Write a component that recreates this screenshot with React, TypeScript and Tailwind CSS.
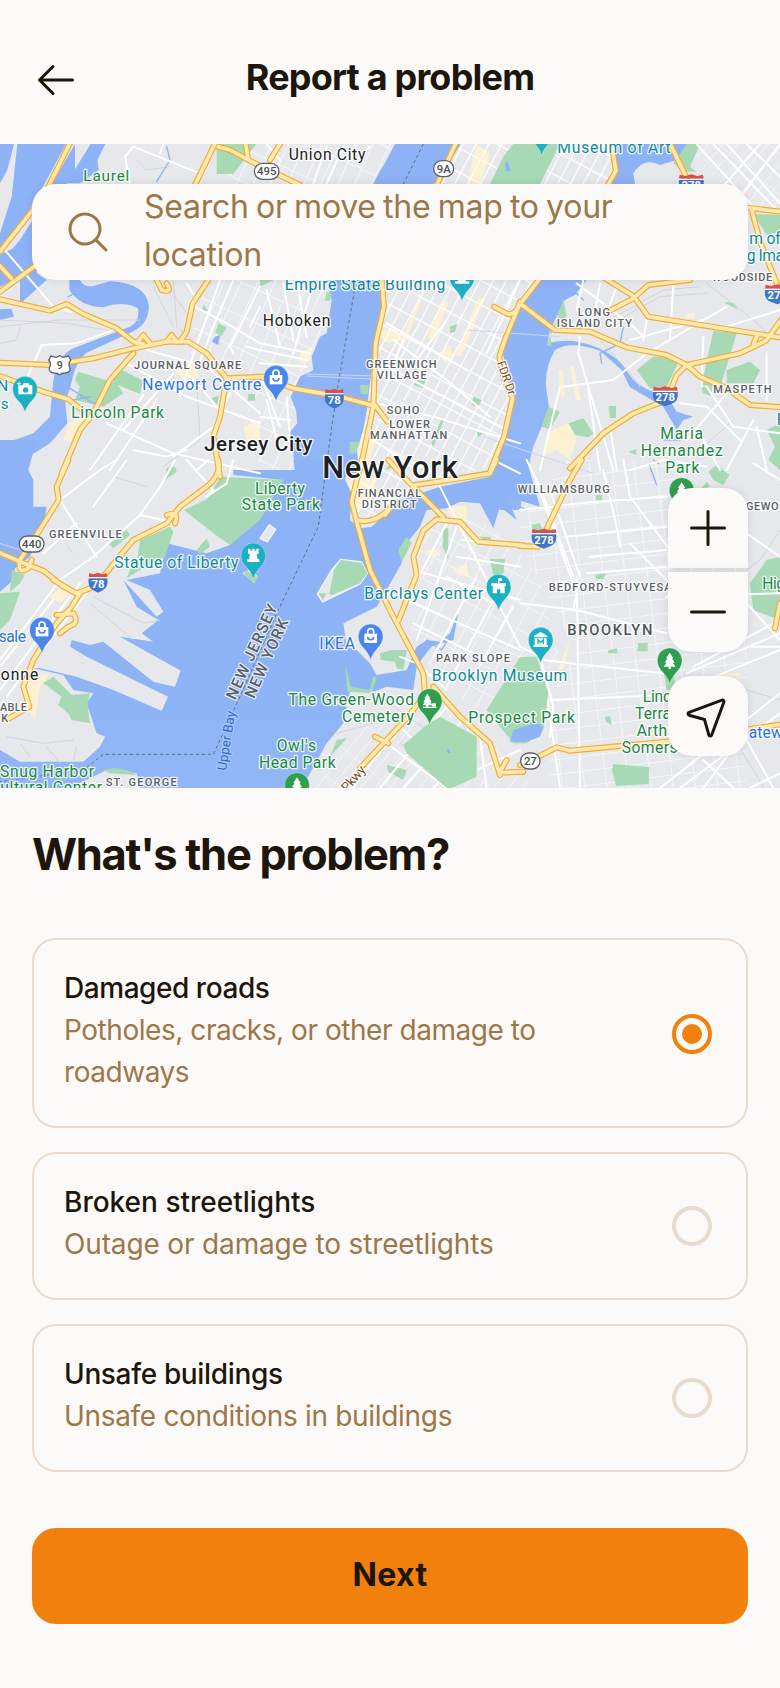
import type { ReactNode } from "react";
import { PiArrowLeft, PiMagnifyingGlass, PiMinus, PiNavigationArrow, PiPlus } from "react-icons/pi";

/* The map is drawn on a 3x canvas that is split into six tiles; each feature is given in its tile's coordinates. */
const ORIGINS = {
  A: [0, 420],
  B: [780, 420],
  C: [1560, 420],
  D: [0, 1380],
  E: [780, 1380],
  F: [1560, 1380],
} as const;
type Tile = keyof typeof ORIGINS;
type Shape = [Tile, string];

const WATER: Shape[] = [
  ["A", "M0 12H42L22 90L0 130Z"],
  ["A", "M52 12H198L140 120L70 240L18 310L0 330V280L35 170Z"],
  ["A", "M225 12L180 90L110 220L60 300L20 345L60 390L90 370L120 200L225 110Z"],
  ["A", "M272 12H316L292 60L296 90L240 130H200L236 70Z"],
  ["A", "M15 335L110 300V400L140 420L60 492L60 408L0 440V345Z"],
  ["A", "M0 508L34 506L42 530L0 540Z"],
  ["A", "M208 420H240Q250 440 272 440L330 424Q440 430 447 500Q444 552 400 574L260 638Q226 665 214 730L196 790L202 850L150 910L70 960L80 1000H0V915L100 880L150 830L160 720Q170 650 220 625L390 560Q420 545 414 505Q370 480 310 502Q240 500 208 450Z"],
  ["A", "M645 590L660 585L655 615L635 605Z"],
  ["D", "M0 -60H110L85 30L100 60V140H140L132 190L90 290L45 325L40 360L0 395Z"],
  ["B", "M405 12H602L555 90L520 132L360 420L368 500L350 600L328 740L322 800L310 870L290 930L300 1000H105L100 940L86 880L112 850L108 810L92 770L120 710L160 690L155 650L180 590L200 580L215 480L200 420L340 132L350 110L380 60Z"],
  ["C", "M275 12H530L470 60L420 75Q370 50 340 100L345 132L300 300L200 420L165 465L135 480L115 520L90 570L82 612Q140 590 220 618Q300 650 325 700Q350 740 400 755L440 765L470 815L520 830L490 840L470 870L430 800L330 742L305 690L240 632Q150 600 105 630Q75 680 78 740L87 800L65 860L40 920L20 1000L0 1110H-60L-95 990L-50 900L-20 800L-55 620L0 500L60 420L265 132L285 100Z"],
  ["D", "M700 30L885 30L880 0H1050L1035 60L1055 100L1050 180L1080 205L1115 200L1165 155L1200 120L1320 80L1470 50L1490 0H1580L1620 140L1520 110L1550 180L1500 140L1480 205L1440 130L1380 125L1340 145L1280 150L1260 200L1220 250L1205 310L1165 380L1130 440L1030 490L1040 560L1070 570L1110 610L1130 645L1220 630L1250 560L1280 540L1320 545L1350 520L1375 460L1360 540L1290 560L1250 620L1240 690L1160 680L1120 695H1050L1030 790L980 850L930 940L905 984H420L410 940L320 930L210 984H0V870L60 905H250L300 860L315 830L290 820L260 730L280 700L220 690L190 645L100 625L118 624L230 650L340 690L485 752L504 710L260 590L210 560L215 540L270 555L310 545L460 665L525 680L542 632L360 530L460 545L425 520L475 480L410 440L370 360L470 470L490 455L450 390L380 360L480 340L500 250L620 280L690 255L850 60L700 45Z"],
];

const ISLANDS: Shape[] = [
  ["E", "M172 402L215 330L242 298L305 306L322 340L300 372L188 426Z"],
  ["E", "M0 235L28 194L47 208L22 246Z"],
  ["D", "M730 340L750 330L772 350L762 366Z"],
];

const PARKS: Shape[] = [
  ["A", "M650 12H770L700 102H650Z"],
  ["A", "M235 695L350 730L370 760L310 800L225 780L240 740L225 720Z"],
  ["A", "M350 682L430 722L420 762L340 730Z"],
  ["A", "M655 550L680 562L665 588L646 578Z"],
  ["A", "M610 495L625 510L605 515Z"],
  ["A", "M745 762h20v20h-22z"],
  ["A", "M635 775l22 -8l-6 28z"],
  ["A", "M510 975L530 990H505Z"],
  ["B", "M760 12H900L840 132H690L730 50Z"],
  ["B", "M0 420H40L0 440Z"],
  ["B", "M200 455L215 460L210 482H195Z"],
  ["B", "M570 560L592 552L585 575L570 580Z"],
  ["B", "M465 720L496 722L490 745L462 735Z"],
  ["B", "M640 770L665 780L655 800L634 796Z"],
  ["B", "M650 875L668 880L655 892Z"],
  ["B", "M545 835L553 840L520 920L514 910Z"],
  ["B", "M270 905H300L285 940H268Z"],
  ["B", "M300 735H325V762H302Z"],
  ["C", "M460 70L500 12H540L510 80L530 95L490 95Z"],
  ["C", "M700 222L780 225V275L740 285Z"],
  ["C", "M130 475L110 540L80 615L95 620L90 570L140 530Z"],
  ["C", "M580 572L650 580L600 745L545 735Z"],
  ["C", "M350 690L400 650L480 655L440 742L390 745Z"],
  ["C", "M620 690L690 665L720 690L700 730L620 730Z"],
  ["C", "M545 740H575V768L548 760Z"],
  ["C", "M610 488Q650 480 652 510Q635 495 610 488Z"],
  ["C", "M85 800L120 815L90 868L65 860Z"],
  ["C", "M145 850L190 835L220 880L205 892L165 885Z"],
  ["C", "M266 798h22v36h-18z"],
  ["C", "M740 870L780 850V990L745 960L765 920Z"],
  ["C", "M325 935l24 -8v18z"],
  ["D", "M552 150L620 118L662 50L850 60L780 180L690 255L640 220Z"],
  ["D", "M420 240L510 200L520 215L495 290L420 330L380 355L390 330L412 300Z"],
  ["D", "M325 250L380 210L390 225L340 265Z"],
  ["D", "M590 270L620 235L630 260L600 282Z"],
  ["D", "M500 25L525 20L530 35L495 60Z"],
  ["D", "M195 245L222 285L210 270Z"],
  ["D", "M35 330L75 345L60 370L30 395Z"],
  ["D", "M0 400L60 395L30 480L0 510Z"],
  ["D", "M130 670L160 650L215 705L270 700L262 730L270 790L215 780L205 760L175 735L185 710Z"],
  ["D", "M310 930Q360 915 410 945L330 940Z"],
  ["D", "M735 330L775 350L765 370L732 345Z"],
  ["E", "M208 400L222 330L242 300L305 308L322 340L300 370L215 405L200 398L188 420L175 400Z"],
  ["E", "M360 580L395 570L440 570L430 630L410 625L405 605L362 600Z"],
  ["E", "M255 610L272 680L330 690L338 650L350 652L335 700L262 695Z"],
  ["E", "M380 915L440 930L430 960L385 935Z"],
  ["E", "M550 205H565V300L548 260Z"],
  ["E", "M690 298L735 296L730 340L700 345Z"],
  ["E", "M655 230L692 232V250Z"],
  ["E", "M375 30L395 5L402 22Z"],
  ["E", "M415 270L440 230L455 250L425 305Z"],
  ["E", "M230 840L260 835L210 890Z"],
  ["F", "M565 35L590 15L628 45L610 75L580 60Z"],
  ["F", "M690 370L740 300L780 290V480L700 450Z"],
  ["F", "M280 912L388 922L386 972L288 978L276 930Z"],
  ["F", "M355 550L383 548V574H352Z"],
  ["F", "M265 570L290 565L293 580H265Z"],
  ["F", "M225 345L258 340L250 358H228Z"],
  ["F", "M228 105H246V122H228Z"],
  ["F", "M255 770L270 768L275 795L258 785Z"],
  ["F", "M432 640H460L470 690H440Z"],
  ["F", "M35 195L60 190L70 215H40Z"],
  ["F", "M540 90L560 65L570 80Z"],
];

/* Large parks that interrupt the street grid. */
const GREAT_PARKS: Shape[] = [
  ["E", "M430 855L500 795L540 770L650 830V950L575 984H560L440 880Z"],
  ["E", "M680 750L780 590L830 590L865 700L850 810L800 850L760 850Z"],
];

const PONDS: Shape[] = [
  ["E", "M760 810L790 800L830 790L850 800L840 830L800 845H750Z"],
  ["E", "M560 870l6 -4l6 12l-8 2z"],
  ["B", "M735 70L742 62L752 92L738 96Z"],
];

const DISTRICTS: Shape[] = [
  ["A", "M205 850L270 820L235 905L190 900Z"],
  ["A", "M730 860L780 840V905L740 900Z"],
  ["A", "M520 690L570 670L600 710L560 730Z"],
  ["B", "M350 580L400 560L430 600L380 610Z"],
  ["B", "M540 640l30 -25l10 30l-25 25z"],
  ["B", "M470 490l22 -25l-60 150l-16 8z"],
  ["B", "M545 480l20 10l-45 110l-18 -5z"],
  ["B", "M655 470l18 10l-70 170l-16 -4z"],
  ["B", "M120 640L155 620L150 665L120 670Z"],
  ["B", "M310 860L350 900L320 990H285Z"],
  ["B", "M650 12L690 40L660 132H620Z"],
  ["C", "M80 880L160 840L170 900L150 960L110 930L70 950Z"],
  ["C", "M115 690h12l8 80h-12z"],
  ["C", "M150 680h12l20 100h-14z"],
  ["C", "M495 520h30v15h-30z"],
  ["D", "M80 650L150 640L120 680L105 780L75 740Z"],
  ["D", "M150 410L200 370L210 400L180 430Z"],
  ["E", "M265 60L300 20L350 60L330 130L290 150L270 110Z"],
  ["E", "M560 145L620 135L620 180L580 190Z"],
  ["E", "M500 270h40v18h-40z"],
  ["E", "M580 330L620 310L625 350L590 345Z"],
  ["F", "M600 640H660V650H600Z"],
  ["F", "M150 540L130 630L112 630Z"],
];

const STREETS: Shape[] = [
  ["A", "M10 325L160 500L215 515M400 20L600 100M400 20L375 50L390 130M480 40L490 12"],
  ["A", "M70 740L125 615L230 610L340 570M560 430L585 470L565 490L680 550L780 610M660 420L560 700L540 770M700 420L640 560L590 690M780 440L690 620L700 640"],
  ["A", "M440 630L620 680L780 820M380 670L560 770L780 850M320 850L520 940L780 1000M430 765L270 990M470 780L330 990M520 700L370 870M400 930L500 950L560 930M690 760L640 860L520 950"],
  ["A", "M740 620L780 630M750 560L780 500M560 700L600 740L650 800"],
  ["B", "M0 610L150 640M0 630L140 660M20 450L60 620M70 430L100 600M110 420L140 590M160 430L100 640M10 0L60 60M200 20L160 130M250 20L200 130M330 20L290 60M0 670L140 680M20 780L50 900M80 770L90 900M0 830L90 840M0 700L60 860"],
  ["B", "M380 550L620 690M400 600L560 720L690 830M400 690L740 870M350 790L520 830L780 910M340 900L470 990M380 720L430 600M470 660L560 540"],
  ["C", "M0 420L-100 640M170 430L340 560L370 590M190 420L170 510M240 430L220 540M290 440L260 520M380 540L370 600M460 430L450 600M180 590L175 640L205 740L280 990M550 590L545 740M130 740L280 720L380 640L620 500M330 600L550 540M780 510L620 560M120 740L60 990M205 750L240 990M270 860L290 990"],
  ["C", "M530 12L700 200M580 12L780 220M620 12L780 190M680 12L780 110M780 12L640 200M720 12L600 150M740 640L740 780M620 760L560 830L500 900M560 740L640 860L780 880M480 790L560 800L660 900M700 840L620 990M710 860L740 990M540 880L600 990M330 990L430 960L560 980"],
  ["D", "M180 120L230 200L290 290M180 120L300 30L350 0M380 0L280 140M525 0L480 80L420 165L510 185M420 165L280 290L180 360L0 600M230 190L130 280M160 420L0 620M240 370L0 690M270 385L20 710M560 0L640 90L620 110M590 30L625 0M700 0L680 70L620 110"],
  ["E", "M540 80L590 180L780 560M560 190L440 420L550 470M590 200L470 540M460 330L780 420M440 420L780 570M460 490L660 590M610 240L780 260M590 290L780 320M560 350L700 430M650 350L520 590M700 420L560 680M760 440L640 650M420 590L470 610L560 690"],
  ["E", "M510 700L340 900L280 984M560 740L360 984M600 790L430 984M480 740L620 860M420 800L560 940M380 850L560 984M620 880L520 984M660 830L680 984M780 870L560 970M700 0L780 40"],
  ["F", "M20 0L60 80L160 350M90 90L180 350M40 40L170 400L160 450M250 30L290 200L300 260M310 0L330 110L480 310M0 150L180 130L290 120L440 110M0 430L170 450L440 520M0 590L150 610L430 640M170 350L180 984M440 410L780 400M700 10L780 60M90 720L440 705M80 700L120 984M0 560L60 590L100 740L90 830"],
  ["F", "M680 220L780 290M680 430L780 540M500 640L780 520M520 620L780 480M680 560H780M460 700L780 570M420 984L780 700M480 984L780 760M550 900L640 984M680 840L760 984M330 250L480 400M210 290L440 270M200 340L440 320M140 230L440 200M620 890L550 984M690 984L780 940"],
];

const THIN: Shape[] = [
  ["A", "M0 540L200 550L380 580M0 560L180 540L420 540M460 440L520 560M500 430L560 520M410 60L440 90L510 80M0 610L50 600L60 560M520 420L530 560L580 600M490 980L600 900L590 720"],
  ["C", "M250 550L430 450L540 440M260 560L420 470L560 460M560 430L700 540L740 580M640 840L540 930M240 600L330 700L360 740"],
  ["D", "M280 410L430 490L480 480M270 430L400 540M0 250L60 270M20 830L130 850L220 840M60 850L90 890M140 860L180 910M230 860L220 900M340 50L440 80"],
  ["E", "M230 820L340 790M420 850L590 984M330 690L600 880"],
  ["F", "M780 210L720 300L680 330M680 690L780 720M560 700L730 980"],
];

const CREEKS: Shape[] = [
  ["A", "M330 440L400 480M500 20L510 60L470 125M205 470L260 440L290 445M210 745L280 790L300 780M220 780L270 770"],
  ["C", "M160 450L190 480M310 560L300 610L240 640L245 670M430 900L480 900"],
  ["E", "M590 460L575 520L545 570L500 540M480 600L520 550"],
  ["F", "M390 20L410 75M400 0L415 10M0 140L20 150"],
];

const HIGHWAYS: Shape[] = [
  ["A", "M215 0L130 170L0 335M0 455L105 378M0 378L34 415M0 478L150 512L200 492L250 522L350 565L400 605L430 612"],
  ["A", "M0 668L150 675L280 655L400 625L500 605H565L620 640L680 715L790 710"],
  ["A", "M0 708L60 730L130 755L205 778L240 805M400 640L330 720L280 820L240 870L185 1000"],
  ["A", "M625 420L578 490L560 575L540 605M650 0L580 145M655 20L690 30L780 78L900 135M735 0L745 60M470 420L485 450Q520 460 500 430"],
  ["A", "M680 715L660 830L640 890L660 1010M410 610L430 585L450 610M500 605L515 585L530 605"],
  ["B", "M0 710L100 745L240 770L345 798M60 12L30 60M592 0L528 140M365 415L372 500L347 610L340 800L300 990M345 795L382 845"],
  ["B", "M780 490L738 590L718 650L730 710L758 775L732 890L688 1000M780 485Q765 535 735 518L702 500"],
  ["C", "M272 0L288 92L258 145M445 0L515 145M60 415L0 492M0 490L105 570L210 575L320 622L440 645L500 675L540 710L620 745L690 795L790 802"],
  ["C", "M500 675L660 640L738 602L790 530M255 415L340 468L385 530L790 594M270 512L340 475L385 435L510 420M680 203L790 216M695 210L722 310L770 430M700 612L712 585"],
  ["C", "M500 675L470 705L440 780L340 820L250 880L150 985"],
  ["D", "M205 0L170 80L176 120L118 212L60 300Q50 345 85 325L95 300M655 0Q665 45 620 80L540 140L500 190L400 240L350 300L310 350L270 385L230 400L190 380L130 332L60 305L-10 275"],
  ["D", "M500 165Q540 150 525 190M160 360L230 400M240 400L215 440L170 490L100 600L70 680L88 740L22 778M170 465L220 460Q240 490 205 500L180 520"],
  ["E", "M305 0L275 125L290 185L330 330L400 470L490 640L495 705L440 775L300 925M290 180Q340 195 390 145L375 165M385 0L440 60L550 172M710 0L690 40L600 55L465 75"],
  ["E", "M415 482L470 345L460 290L490 212L530 178L600 185L655 245L790 256M520 680L600 770L690 850L720 945M720 935L740 900M720 938L790 935M345 830L385 850"],
  ["F", "M0 258L55 260L90 185L150 60L185 0M0 915L65 885L110 862L150 872L300 858L440 845L790 792M780 430L765 505"],
];

type LabelData = [Tile, number, number, string, number, number, string, string?];
const GREEN = "#1a8742";
const TEAL = "#0e8a96";
const BLUE = "#2a72e0";
const GRAY = "#5b5f64";
const INK = "#202124";

const LABELS: LabelData[] = [
  ["A", 250, 123, "Laurel", 138, 46, GREEN],
  ["A", 402, 687, "JOURNAL SQUARE", 322, 33, GRAY],
  ["A", 427, 750, "Newport Centre", 357, 47, BLUE],
  ["A", -8, 752, "N", 30, 46, TEAL],
  ["A", -14, 808, "rs", 40, 46, TEAL],
  ["A", 214, 833, "Lincoln Park", 278, 47, GREEN],
  ["A", 612, 933, "Jersey City", 325, 62, INK, "500"],
  ["B", 86, 60, "Union City", 230, 47, INK],
  ["B", 74, 450, "Empire State Building", 482, 47, TEAL],
  ["B", 8, 559, "Hoboken", 203, 47, INK],
  ["B", 318, 684, "GREENWICH", 212, 33, GRAY],
  ["B", 350, 717, "VILLAGE", 150, 33, GRAY],
  ["B", 380, 822, "SOHO", 98, 33, GRAY],
  ["B", 388, 863, "LOWER", 122, 33, GRAY],
  ["B", 330, 896, "MANHATTAN", 232, 33, GRAY],
  ["C", 112, 38, "Museum of Art", 340, 47, TEAL],
  ["C", 688, 312, "m of", 94, 47, TEAL],
  ["C", 680, 364, "g Ima", 112, 47, TEAL],
  ["C", 575, 422, "WOODSIDE", 182, 33, GRAY],
  ["C", 173, 528, "LONG", 97, 33, GRAY],
  ["C", 110, 561, "ISLAND CITY", 226, 33, GRAY],
  ["C", 580, 759, "MASPETH", 175, 33, GRAY],
  ["C", 421, 897, "Maria", 128, 47, GREEN],
  ["C", 362, 948, "Hernandez", 246, 47, GREEN],
  ["C", 436, 999, "Park", 102, 47, GREEN],
  ["C", 770, 856, "F", 24, 47, TEAL],
  ["D", 147, 234, "GREENVILLE", 218, 33, GRAY],
  ["D", 343, 323, "Statue of Liberty", 372, 47, TEAL],
  ["D", -4, 545, "sale", 82, 47, BLUE],
  ["D", 2, 660, "onne", 113, 47, INK],
  ["D", 0, 752, "ABLE", 81, 33, GRAY],
  ["D", 4, 785, "K", 22, 33, GRAY],
  ["D", 0, 950, "Snug Harbor", 282, 47, GREEN],
  ["D", -32, 1000, "Cultural Center", 338, 47, GREEN],
  ["D", 317, 977, "ST. GEORGE", 213, 33, GRAY],
  ["E", -15, 102, "Liberty", 150, 47, GREEN],
  ["E", -55, 151, "State Park", 235, 47, GREEN],
  ["E", 293, 110, "FINANCIAL", 191, 33, GRAY],
  ["E", 305, 143, "DISTRICT", 165, 33, GRAY],
  ["E", 187, 55, "New York", 406, 92, INK, "500"],
  ["E", 313, 417, "Barclays Center", 356, 47, TEAL],
  ["E", 178, 566, "IKEA", 107, 47, BLUE],
  ["E", 528, 605, "PARK SLOPE", 222, 33, GRAY],
  ["E", 515, 663, "Brooklyn Museum", 407, 47, TEAL],
  ["E", 85, 735, "The Green-Wood", 377, 47, GREEN],
  ["E", 246, 787, "Cemetery", 216, 47, GREEN],
  ["E", 625, 789, "Prospect Park", 320, 47, GREEN],
  ["E", 50, 874, "Owl's", 118, 47, GREEN],
  ["E", -3, 925, "Head Park", 230, 47, GREEN],
  ["F", -7, 99, "WILLIAMSBURG", 276, 33, GRAY],
  ["F", 678, 150, "GEWO", 98, 33, GRAY],
  ["F", 86, 392, "BEDFORD-STUYVESA", 369, 33, GRAY],
  ["F", 142, 524, "BROOKLYN", 255, 44, "#505459", "500"],
  ["F", 368, 727, "Linco", 112, 47, GREEN],
  ["F", 345, 777, "Terra", 108, 47, GREEN],
  ["F", 350, 828, "Arthu", 118, 47, GREEN],
  ["F", 305, 880, "Somers", 168, 47, GREEN],
  ["F", 727, 388, "Hig", 68, 47, GREEN],
  ["F", 686, 833, "atew", 102, 47, BLUE],
];

const at = (tile: Tile, x: number, y: number) =>
  `translate(${ORIGINS[tile][0] + x} ${ORIGINS[tile][1] + y})`;

function Layer({ shapes, ...rest }: { shapes: Shape[]; fill?: string; stroke?: string; strokeWidth?: number }) {
  return (
    <g strokeLinejoin="round" strokeLinecap="round" {...rest}>
      {shapes.map(([tile, d]) => (
        <path key={tile + d} d={d} transform={at(tile, 0, 0)} />
      ))}
    </g>
  );
}

function Label({ d }: { d: LabelData }) {
  const [tile, x, y, text, length, size, color, weight] = d;
  return (
    <text
      transform={at(tile, x, y)}
      fontSize={size}
      textLength={length}
      fill={color}
      fontWeight={weight ?? (size === 33 ? "500" : "400")}
      stroke="#fff"
      strokeOpacity={0.85}
      strokeWidth={8}
      strokeLinejoin="round"
      paintOrder="stroke"
    >
      {text}
    </text>
  );
}

function RotatedLabel(p: { tile: Tile; x: number; y: number; angle: number; length: number; size: number; color: string; halo?: string; weight?: number; children: string }) {
  return (
    <text
      transform={`${at(p.tile, p.x, p.y)} rotate(${p.angle})`}
      fontSize={p.size}
      textLength={p.length}
      fill={p.color}
      fontWeight={p.weight ?? 500}
      stroke={p.halo ?? "#fff"}
      strokeWidth={7}
      strokeLinejoin="round"
      paintOrder="stroke"
    >
      {p.children}
    </text>
  );
}

function Pin({ tile, x, y, color, children }: { tile: Tile; x: number; y: number; color: string; children: ReactNode }) {
  return (
    <g transform={at(tile, x, y)}>
      <path d="M0 71C-3 60 -9 49 -17 40C-28 28 -37 18 -37 0A37 37 0 0 1 37 0C37 18 28 28 17 40C9 49 3 60 0 71Z" fill={color} stroke="#fff" strokeOpacity={0.5} strokeWidth={2} />
      <g fill="#fff">{children}</g>
    </g>
  );
}

const Bag = () => (
  <>
    <path d="M-19 -8H19V20H-19Z" />
    <path d="M-9 -8V-14A9 9 0 0 1 9 -14V-8" fill="none" stroke="#fff" strokeWidth={5} />
    <path d="M-9 1A9 9 0 0 0 9 1" fill="none" stroke="#4b86ef" strokeWidth={5} />
  </>
);
const Tree = () => <path d="M0 -23L11 -6H7L15 7H9L18 19H3V26H-3V19H-18L-9 7H-15L-7 -6H-11Z" />;

function Interstate({ tile, x, y, n }: { tile: Tile; x: number; y: number; n: string }) {
  const w = n.length > 2 ? 37 : 28;
  return (
    <g transform={at(tile, x, y)}>
      <path d={`M${-w} -12H${w}Q${w + 4} 16 ${w / 2} 24L0 31L${-w / 2} 24Q${-w - 4} 16 ${-w} -12Z`} fill="#3f76c8" />
      <path d={`M${-w} -16L${-w + 2} -28L${-w / 2} -24L0 -29L${w / 2} -24L${w - 2} -28L${w} -16Z`} fill="#d9504f" />
      <path d={`M${-w} -14H${w}`} stroke="#fff" strokeWidth={3} />
      <text y={16} textAnchor="middle" fontSize={34} fontWeight={700} fill="#fff">{n}</text>
    </g>
  );
}

function RouteBadge({ tile, x, y, n, w }: { tile: Tile; x: number; y: number; n: string; w: number }) {
  return (
    <g transform={at(tile, x, y)}>
      <rect x={-w / 2} y={-24} width={w} height={48} rx={24} fill="#fff" stroke="#5f6368" strokeWidth={4} />
      <text y={12} textAnchor="middle" fontSize={34} fontWeight={500} fill="#4a4e52">{n}</text>
    </g>
  );
}

function CityMap() {
  return (
    <svg viewBox="0 432 2340 1932" className="block h-full w-full" style={{ fontFamily: "Roboto, sans-serif" }}>
      <defs>
        <pattern id="manhattan" width="34" height="64" patternUnits="userSpaceOnUse" patternTransform="rotate(28)">
          <path d="M0 0V64M0 0H34" stroke="#fff" strokeWidth={7} fill="none" />
        </pattern>
        <pattern id="jersey" width="46" height="92" patternUnits="userSpaceOnUse" patternTransform="rotate(25)">
          <path d="M0 0V92M0 0H46" stroke="#f6f7f9" strokeWidth={6} fill="none" />
        </pattern>
        <pattern id="brooklyn" width="66" height="44" patternUnits="userSpaceOnUse" patternTransform="rotate(-7)">
          <path d="M0 0V44M0 0H66" stroke="#f4f5f7" strokeWidth={6} fill="none" />
        </pattern>
        <pattern id="slope" width="46" height="72" patternUnits="userSpaceOnUse" patternTransform="rotate(28)">
          <path d="M0 0V72M0 0H46" stroke="#f4f5f7" strokeWidth={6} fill="none" />
        </pattern>
        <pattern id="sunset" width="34" height="96" patternUnits="userSpaceOnUse" patternTransform="rotate(40)">
          <path d="M0 0V96M0 0H34" stroke="#f4f5f7" strokeWidth={5} fill="none" />
        </pattern>
        <linearGradient id="water" gradientUnits="userSpaceOnUse" x1="0" y1="432" x2="0" y2="2364">
          <stop offset="0" stopColor="#8db2f5" />
          <stop offset="0.45" stopColor="#94b9f8" />
          <stop offset="1" stopColor="#9fc3fb" />
        </linearGradient>
      </defs>
      <rect y="432" width="2340" height="1932" fill="#e6e8ec" />
      <Layer shapes={DISTRICTS} fill="#fcf1d2" />
      <path d="M1360 432H1840L1825 552L1620 840L1560 910L1500 1060L1540 1200L1470 1400L1240 1460L1180 1540L1060 1560L1050 1440L1100 1230L1130 1020L1150 840Z" fill="url(#manhattan)" />
      <path d="M700 432H1180L1130 552L980 840V1000L880 1230L880 1410H780L720 1100L560 1060L620 840Z" fill="url(#jersey)" />
      <path d="M1700 1380H2020L2240 1700V2364H1650V2080L1730 1960L1620 1740L1560 1650V1560Z" fill="url(#brooklyn)" />
      <path d="M1270 1560H1440L1560 1650L1620 1740L1680 1980L1440 2140L1300 2020L1220 1860Z" fill="url(#slope)" />
      <path d="M1280 2090L1440 2190L1600 2364H920L1060 2200Z" fill="url(#sunset)" />
      <path d="M2060 432H2340V620H2200Z" fill="url(#sunset)" />
      <Layer shapes={WATER} fill="url(#water)" />
      <Layer shapes={ISLANDS} fill="#e6e8ec" stroke="#f3f5f8" strokeWidth={4} />
      <Layer shapes={PARKS} fill="#a6d9b4" />
      <g transform="translate(0 1380)" fill="#e6e8ec">
        <path d="M1170 375L1190 350L1225 370L1180 368L1220 390L1165 385Z M1010 720l60 20l-5 8l-58 -16z M1190 345l34 14l-4 10l-36 -14z" />
      </g>
      <Layer shapes={THIN} fill="none" stroke="#d2d5da" strokeWidth={3} />
      <Layer shapes={CREEKS} fill="none" stroke="#90b3f3" strokeWidth={4} />
      <Layer shapes={STREETS} fill="none" stroke="#fff" strokeWidth={6} />
      <Layer shapes={GREAT_PARKS} fill="#a6d9b4" />
      <Layer shapes={PONDS} fill="#8fb4f6" />
      <path d="M920 1122L1130 1128M920 1128L1130 1138M1400 990L1680 1010M1450 1310L1780 1420" fill="none" stroke="#c8d8f3" strokeWidth={3} />
      <Layer shapes={HIGHWAYS} fill="none" stroke="#f5ab2e" strokeWidth={18} />
      <Layer shapes={HIGHWAYS} fill="none" stroke="#feeab0" strokeWidth={11} />
      <path d="M1270 432L1210 552L1065 860L1010 1180L980 1390L955 1580L830 1840L720 2090L640 2263H310L250 2310L0 2345" fill="none" stroke="#647086" strokeWidth={3} strokeDasharray="10 8" />

      <Interstate tile="B" x={223} y={775} n="78" />
      <Interstate tile="C" x={436} y={768} n="278" />
      <Interstate tile="C" x={514} y={132} n="278" />
      <Interstate tile="C" x={772} y={462} n="278" />
      <Interstate tile="D" x={294} y={367} n="78" />
      <Interstate tile="F" x={72} y={235} n="278" />
      <RouteBadge tile="A" x={800} y={94} n="495" w={74} />
      <RouteBadge tile="B" x={551} y={86} n="9A" w={60} />
      <RouteBadge tile="D" x={95} y={252} n="440" w={74} />
      <RouteBadge tile="F" x={31} y={903} n="27" w={58} />
      <g transform={at("A", 179, 675)}>
        <path d="M-26 -27L-10 -23L0 -28L10 -23L26 -27L33 -15Q24 -4 31 9Q33 22 16 24Q6 24 0 29Q-6 24 -16 24Q-33 22 -31 9Q-24 -4 -33 -15Z" fill="#fff" stroke="#5f6368" strokeWidth={4} />
        <text y={11} textAnchor="middle" fontSize={32} fontWeight={500} fill="#4a4e52">9</text>
      </g>

      {LABELS.map((d) => (
        <Label key={d[0] + d[3]} d={d} />
      ))}
      <RotatedLabel tile="D" x={706} y={722} angle={-65.5} length={308} size={47} color={GRAY} halo="#e9f0fb">NEW JERSEY</RotatedLabel>
      <RotatedLabel tile="D" x={762} y={718} angle={-66} length={256} size={47} color={GRAY} halo="#e9f0fb">NEW YORK</RotatedLabel>
      <RotatedLabel tile="D" x={678} y={933} angle={-81} length={180} size={40} color="#2f68c8" halo="#a9c8fb" weight={400}>Upper Bay</RotatedLabel>
      <RotatedLabel tile="B" x={710} y={668} angle={70} length={106} size={36} color="#77501f" weight={400}>FDR Dr</RotatedLabel>
      <RotatedLabel tile="E" x={262} y={998} angle={-50} length={88} size={40} color="#77501f" weight={400}>Pkwy</RotatedLabel>

      <Pin tile="A" x={75} y={746} color="#1cb0c4">
        <path d="M-20 -10H-8L-4 -17H10L14 -10H22V17H-20Z" />
        <circle cx={2} cy={4} r={8} fill="#1cb0c4" />
        <path d="M-18 -21v12M-24 -15h12" stroke="#fff" strokeWidth={3} />
      </Pin>
      <Pin tile="B" x={606} y={412} color="#1cb0c4">
        <path d="M-10 0H10L12 12H22V19H-22V12H-12Z" />
      </Pin>
      <Pin tile="B" x={48} y={713} color="#4b86ef"><Bag /></Pin>
      <Pin tile="C" x={65} y={-24} color="#1cb0c4">{null}</Pin>
      <Pin tile="D" x={760} y={286} color="#1cb0c4">
        <path d="M-16 -20H-9V-14H-4V-20H4V-14H9V-20H16V-5H10L13 12H18V20H-18V12H-13L-10 -5H-16Z" />
      </Pin>
      <Pin tile="D" x={126} y={509} color="#4b86ef"><Bag /></Pin>
      <Pin tile="E" x={716} y={380} color="#1cb0c4">
        <path d="M-22 -10H-2V-25H10V-17H2V-10H22V-2H18V20H5V8H-5V20H-18V-2H-22Z" />
      </Pin>
      <Pin tile="E" x={332} y={529} color="#4b86ef"><Bag /></Pin>
      <Pin tile="F" x={62} y={539} color="#1cb0c4">
        <path d="M0 -23L20 -12V-7H-20V-12ZM-18 -4H18V17H22V22H-22V17H-18Z" />
        <path d="M-8 14V0L0 9L8 0V14" fill="none" stroke="#1cb0c4" strokeWidth={4} />
      </Pin>
      <Pin tile="E" x={509} y={723} color="#2f9e4f">
        <path d="M-7 -22L2 -8H-1L6 3H2L8 13H-4V17H20V21H-20V17H-10V13H-21L-15 3H-19L-12 -8H-16Z" />
        <path d="M7 17V7H19V17Z" />
      </Pin>
      <Pin tile="F" x={449} y={601} color="#2f9e4f"><Tree /></Pin>
      <Pin tile="F" x={485} y={90} color="#2f9e4f"><Tree /></Pin>
      <Pin tile="E" x={111} y={975} color="#2f9e4f"><Tree /></Pin>
    </svg>
  );
}

const PROBLEMS = [
  { title: "Damaged roads", titleSpacing: "tracking-[-0.45px]", detail: "Potholes, cracks, or other damage to roadways", detailSpacing: "tracking-[-0.45px]", selected: true },
  { title: "Broken streetlights", titleSpacing: "tracking-normal", detail: "Outage or damage to streetlights", detailSpacing: "tracking-[-0.15px]", selected: false },
  { title: "Unsafe buildings", titleSpacing: "tracking-[-0.35px]", detail: "Unsafe conditions in buildings", detailSpacing: "tracking-[-0.32px]", selected: false },
];

function ProblemOption({ title, titleSpacing, detail, detailSpacing, selected }: (typeof PROBLEMS)[number]) {
  return (
    <label className="flex items-center gap-8 rounded-3xl border-2 border-[#e9dccf] p-[30px]">
      <span className="flex grow flex-col text-[28px] leading-[42px]">
        <span className={`${titleSpacing} -translate-y-[3px] font-medium text-[#1c160d]`}>{title}</span>
        <span className={`${detailSpacing} w-[500px] -translate-y-[3px] text-[#9c7749]`}>{detail}</span>
      </span>
      <span className={selected
        ? "mr-1 flex size-10 shrink-0 translate-y-px items-center justify-center rounded-full border-4 border-[#f2800d]"
        : "mr-1 flex size-10 shrink-0 items-center justify-center rounded-full border-4 border-[#e9dccf]"}>
        {selected && <span className="size-5 rounded-full bg-[#f2800d]" />}
      </span>
    </label>
  );
}

export default function App() {
  return (
    <main className="flex h-[1688px] w-[780px] flex-col overflow-hidden bg-[#fcfaf8] text-[#1c160d]" style={{ fontFamily: "Inter, sans-serif" }}>
      <header className="flex h-36 shrink-0 items-center px-8 pt-4">
        <PiArrowLeft className="size-12" />
        <h1 className="grow pr-12 pb-1.5 text-center text-[36px] leading-[45px] font-bold tracking-[-0.8px]">Report a problem</h1>
      </header>

      <section className="relative h-[644px] shrink-0 overflow-hidden">
        <CityMap />
        <div className="absolute inset-x-8 top-10 flex h-24 items-center rounded-3xl bg-[#fcfaf8] pl-8 text-[#9c7749] shadow-[0_0_8px_rgba(0,0,0,0.1)]">
          <PiMagnifyingGlass className="size-12 shrink-0" />
          <p className="ml-8 w-[520px] -translate-y-px text-[32px] leading-[48px] tracking-[-0.25px] [word-spacing:-1.4px]">Search or move the map to your location</p>
        </div>
        <div className="absolute right-8 bottom-8 flex flex-col gap-6">
          <div className="flex flex-col gap-1">
            <button className="flex size-20 items-center justify-center rounded-t-3xl bg-[#fcfaf8] shadow-[0_0_8px_rgba(0,0,0,0.1)]">
              <PiPlus className="size-12" />
            </button>
            <button className="flex size-20 items-center justify-center rounded-b-3xl bg-[#fcfaf8] shadow-[0_0_8px_rgba(0,0,0,0.1)]">
              <PiMinus className="size-12" />
            </button>
          </div>
          <button className="flex size-20 items-center justify-center rounded-3xl bg-[#fcfaf8] pb-0.5 pl-0.5 shadow-[0_0_8px_rgba(0,0,0,0.1)]">
            <PiNavigationArrow className="size-12 -scale-x-100" />
          </button>
        </div>
      </section>

      <h2 className="px-8 pt-[39px] text-[43.5px] leading-[55px] font-bold tracking-[-1.3px]">What's the problem?</h2>
      <div className="flex flex-col gap-6 px-8 pt-14">
        {PROBLEMS.map((problem) => (
          <ProblemOption key={problem.title} {...problem} />
        ))}
      </div>
      <div className="px-8 pt-14">
        <button className="h-24 w-full rounded-3xl bg-[#f2800d] pb-0.5 text-[32px] font-bold tracking-[0.4px]">Next</button>
      </div>
    </main>
  );
}
